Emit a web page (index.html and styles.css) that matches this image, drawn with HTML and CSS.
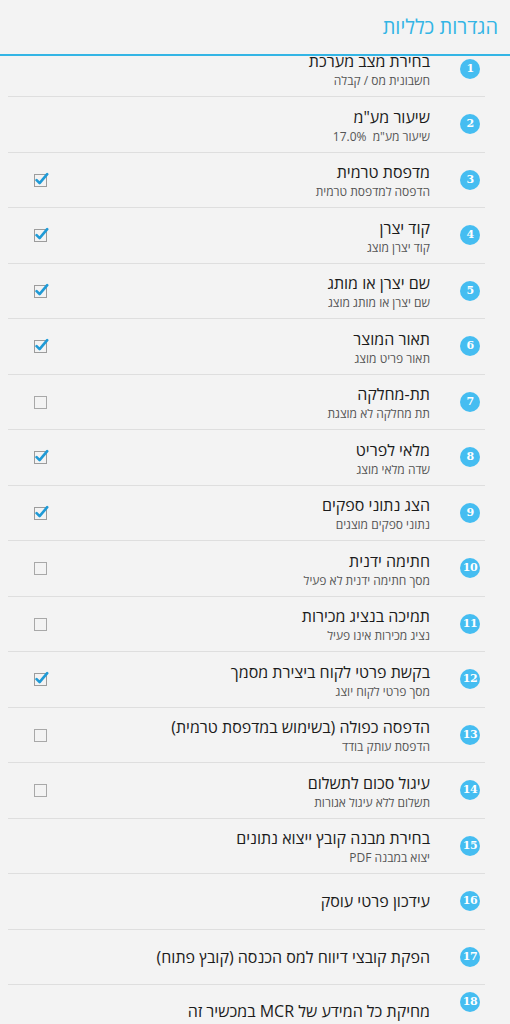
FILE: index.html
```html
<!DOCTYPE html>
<html lang="he" dir="rtl">
<head>
<meta charset="utf-8">
<link rel="stylesheet" href="styles.css">
</head>
<body>
<div class="screen">
  <header class="bar"><h1 class="bar-title">הגדרות כלליות</h1></header>
  <div class="viewport">
    <ul class="list">
      <li class="row"><span class="num">1</span><div class="txt"><div class="t">בחירת מצב מערכת</div><div class="s">חשבונית מס / קבלה</div></div></li>
      <li class="row"><span class="num">2</span><div class="txt"><div class="t">שיעור מע"מ</div><div class="s">שיעור מע"מ&nbsp; 17.0%</div></div></li>
      <li class="row"><span class="num">3</span><div class="txt"><div class="t">מדפסת טרמית</div><div class="s">הדפסה למדפסת טרמית</div></div><span class="cb on"><svg viewBox="0 0 16 16" width="16" height="16"><rect x="1.5" y="2.5" width="12" height="12" fill="none" stroke="#9c9c9c" stroke-width="1"/><path d="M3.6 8.2 L6.6 11.2 L14.2 2.2" fill="none" stroke="#1f9ad6" stroke-width="2.6" stroke-linecap="round" stroke-linejoin="round"/></svg></span></li>
      <li class="row"><span class="num">4</span><div class="txt"><div class="t">קוד יצרן</div><div class="s">קוד יצרן מוצג</div></div><span class="cb on"><svg viewBox="0 0 16 16" width="16" height="16"><rect x="1.5" y="2.5" width="12" height="12" fill="none" stroke="#9c9c9c" stroke-width="1"/><path d="M3.6 8.2 L6.6 11.2 L14.2 2.2" fill="none" stroke="#1f9ad6" stroke-width="2.6" stroke-linecap="round" stroke-linejoin="round"/></svg></span></li>
      <li class="row"><span class="num">5</span><div class="txt"><div class="t">שם יצרן או מותג</div><div class="s">שם יצרן או מותג מוצג</div></div><span class="cb on"><svg viewBox="0 0 16 16" width="16" height="16"><rect x="1.5" y="2.5" width="12" height="12" fill="none" stroke="#9c9c9c" stroke-width="1"/><path d="M3.6 8.2 L6.6 11.2 L14.2 2.2" fill="none" stroke="#1f9ad6" stroke-width="2.6" stroke-linecap="round" stroke-linejoin="round"/></svg></span></li>
      <li class="row"><span class="num">6</span><div class="txt"><div class="t">תאור המוצר</div><div class="s">תאור פריט מוצג</div></div><span class="cb on"><svg viewBox="0 0 16 16" width="16" height="16"><rect x="1.5" y="2.5" width="12" height="12" fill="none" stroke="#9c9c9c" stroke-width="1"/><path d="M3.6 8.2 L6.6 11.2 L14.2 2.2" fill="none" stroke="#1f9ad6" stroke-width="2.6" stroke-linecap="round" stroke-linejoin="round"/></svg></span></li>
      <li class="row"><span class="num">7</span><div class="txt"><div class="t">תת-מחלקה</div><div class="s">תת מחלקה לא מוצגת</div></div><span class="cb"><svg viewBox="0 0 16 16" width="16" height="16"><rect x="1.5" y="2.5" width="12" height="12" fill="none" stroke="#a8a8a8" stroke-width="1"/></svg></span></li>
      <li class="row"><span class="num">8</span><div class="txt"><div class="t">מלאי לפריט</div><div class="s">שדה מלאי מוצג</div></div><span class="cb on"><svg viewBox="0 0 16 16" width="16" height="16"><rect x="1.5" y="2.5" width="12" height="12" fill="none" stroke="#9c9c9c" stroke-width="1"/><path d="M3.6 8.2 L6.6 11.2 L14.2 2.2" fill="none" stroke="#1f9ad6" stroke-width="2.6" stroke-linecap="round" stroke-linejoin="round"/></svg></span></li>
      <li class="row"><span class="num">9</span><div class="txt"><div class="t">הצג נתוני ספקים</div><div class="s">נתוני ספקים מוצגים</div></div><span class="cb on"><svg viewBox="0 0 16 16" width="16" height="16"><rect x="1.5" y="2.5" width="12" height="12" fill="none" stroke="#9c9c9c" stroke-width="1"/><path d="M3.6 8.2 L6.6 11.2 L14.2 2.2" fill="none" stroke="#1f9ad6" stroke-width="2.6" stroke-linecap="round" stroke-linejoin="round"/></svg></span></li>
      <li class="row"><span class="num">10</span><div class="txt"><div class="t">חתימה ידנית</div><div class="s">מסך חתימה ידנית לא פעיל</div></div><span class="cb"><svg viewBox="0 0 16 16" width="16" height="16"><rect x="1.5" y="2.5" width="12" height="12" fill="none" stroke="#a8a8a8" stroke-width="1"/></svg></span></li>
      <li class="row"><span class="num">11</span><div class="txt"><div class="t">תמיכה בנציג מכירות</div><div class="s">נציג מכירות אינו פעיל</div></div><span class="cb"><svg viewBox="0 0 16 16" width="16" height="16"><rect x="1.5" y="2.5" width="12" height="12" fill="none" stroke="#a8a8a8" stroke-width="1"/></svg></span></li>
      <li class="row"><span class="num">12</span><div class="txt"><div class="t">בקשת פרטי לקוח ביצירת מסמך</div><div class="s">מסך פרטי לקוח יוצג</div></div><span class="cb on"><svg viewBox="0 0 16 16" width="16" height="16"><rect x="1.5" y="2.5" width="12" height="12" fill="none" stroke="#9c9c9c" stroke-width="1"/><path d="M3.6 8.2 L6.6 11.2 L14.2 2.2" fill="none" stroke="#1f9ad6" stroke-width="2.6" stroke-linecap="round" stroke-linejoin="round"/></svg></span></li>
      <li class="row"><span class="num">13</span><div class="txt"><div class="t">הדפסה כפולה (בשימוש במדפסת טרמית)</div><div class="s">הדפסת עותק בודד</div></div><span class="cb"><svg viewBox="0 0 16 16" width="16" height="16"><rect x="1.5" y="2.5" width="12" height="12" fill="none" stroke="#a8a8a8" stroke-width="1"/></svg></span></li>
      <li class="row"><span class="num">14</span><div class="txt"><div class="t">עיגול סכום לתשלום</div><div class="s">תשלום ללא עיגול אגורות</div></div><span class="cb"><svg viewBox="0 0 16 16" width="16" height="16"><rect x="1.5" y="2.5" width="12" height="12" fill="none" stroke="#a8a8a8" stroke-width="1"/></svg></span></li>
      <li class="row"><span class="num">15</span><div class="txt"><div class="t">בחירת מבנה קובץ ייצוא נתונים</div><div class="s">יצוא במבנה PDF</div></div></li>
      <li class="row plain"><span class="num">16</span><div class="txt"><div class="t">עידכון פרטי עוסק</div></div></li>
      <li class="row plain"><span class="num">17</span><div class="txt"><div class="t">הפקת קובצי דיווח למס הכנסה (קובץ פתוח)</div></div></li>
      <li class="row last"><span class="num">18</span><div class="txt"><div class="t">מחיקת כל המידע של MCR במכשיר זה</div></div></li>
    </ul>
  </div>
</div>
</body>
</html>
```

FILE: styles.css
```css
* { box-sizing: border-box; }
html, body {
  margin: 0;
  padding: 0;
  background: #f3f3f3;
}
body {
  font-family: "Open Sans", "Liberation Sans", "DejaVu Sans", sans-serif;
  direction: rtl;
}
.screen {
  width: 510px;
  height: 1024px;
  overflow: hidden;
  display: flex;
  flex-direction: column;
}
.bar {
  height: 56px;
  flex: none;
  border-bottom: 2px solid #33b5e5;
  padding: 0 12px 0 0;
  display: flex;
  align-items: center;
  background: #f3f3f3;
  position: relative;
  z-index: 1;
}
.bar-title {
  margin: 0 0 2px 0;
  font-weight: normal;
  font-size: 20px;
  color: #33b5e5;
}
.viewport {
  flex: 1;
  overflow: hidden;
}
.list {
  list-style: none;
  margin: -14.5px 0 0 0;
  padding: 0;
}
.row {
  height: 55.5px;
  border-bottom: 1px solid #dedede;
  margin: 0 25px 0 8px;
  display: flex;
  align-items: center;
  padding: 0 5px 0 0;
}
.row.last {
  border-bottom: none;
  align-items: flex-start;
  padding-top: 7px;
}
.row.last .txt { padding-top: 9px; }
.row.plain .txt { padding-top: 0; }
.num {
  flex: none;
  width: 20px;
  height: 20px;
  border-radius: 50%;
  background: #45bdf1;
  color: #fff;
  font-family: "DejaVu Serif", "Liberation Serif", serif;
  font-weight: bold;
  font-size: 11px;
  line-height: 20px;
  text-align: center;
  direction: ltr;
  letter-spacing: -0.5px;
}
.txt {
  flex: 1;
  margin-right: 30px;
  padding-top: 4px;
}
.t {
  font-size: 16px;
  line-height: 20px;
  color: #1b1b1b;
}
.s {
  margin-top: 1px;
  font-size: 12px;
  line-height: 18px;
  color: #555;
}
.cb {
  flex: none;
  width: 16px;
  height: 16px;
  margin-left: 25px;
  display: block;
}
.cb svg { display: block; }
```
